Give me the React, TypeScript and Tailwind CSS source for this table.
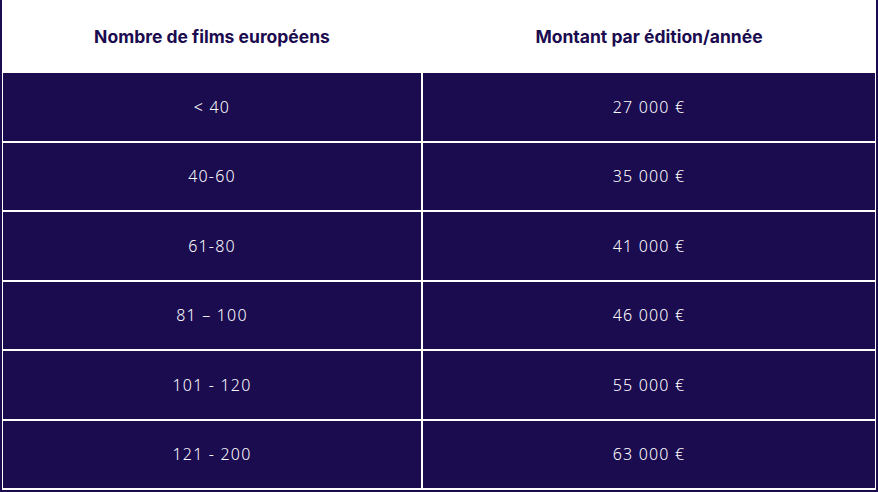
const rows = [
  ["< 40", "27 000 €"],
  ["40-60", "35 000 €"],
  ["61-80", "41 000 €"],
  ["81 – 100", "46 000 €"],
  ["101 - 120", "55 000 €"],
  ["121 - 200", "63 000 €"],
];

export default function App() {
  return (
    <div className="w-[878px] h-[492px] bg-white">
      <div className="h-[492px] border-x-2 border-b-2 border-[#1b0b4f] bg-white px-[1px] pb-[2px]">
        <div className="grid grid-cols-[418px_452px] gap-x-[2px] gap-y-[2px]">
          <div className="h-[71px] pt-[4px] flex items-center justify-center font-['Inter',sans-serif] font-bold text-[17.5px] text-[#1b0b4f]">
            Nombre de films européens
          </div>
          <div className="h-[71px] pt-[4px] flex items-center justify-center font-['Inter',sans-serif] font-bold text-[17.5px] text-[#1b0b4f]">
            Montant par édition/année
          </div>
          {rows.map(([a, b]) => (
            <Row key={a} a={a} b={b} />
          ))}
        </div>
      </div>
    </div>
  );
}

function Row({ a, b }: { a: string; b: string }) {
  return (
    <>
      <div className="h-[67.5px] bg-[#1b0b4f] flex items-center justify-center text-white text-[16px] font-light font-['Noto_Sans',sans-serif] tracking-[1.2px]">
        {a}
      </div>
      <div className="h-[67.5px] bg-[#1b0b4f] flex items-center justify-center text-white text-[16px] font-light font-['Noto_Sans',sans-serif] tracking-[1.2px]">
        {b}
      </div>
    </>
  );
}
